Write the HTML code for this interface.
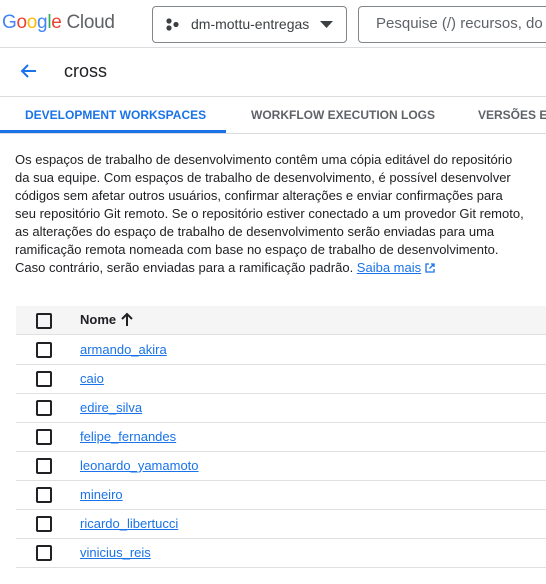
<!DOCTYPE html><html><head><style>
body{margin:0;width:546px;height:584px;overflow:hidden;background:#fff;font-family:"Liberation Sans",Arial,sans-serif;color:#202124;position:relative}
.a{position:absolute;white-space:nowrap}
.cb{position:absolute;left:36px;width:12px;height:12px;border:2px solid #202124;border-radius:2px}
.row{position:absolute;left:16px;width:530px;height:29px;border-bottom:1px solid #e0e0e0}
.row a{position:absolute;left:64px;top:7px;font-size:13px;color:#1a73e8;text-decoration:underline}
</style></head><body>
<div class="a" style="left:2px;top:12px;font-size:19px;letter-spacing:-0.3px"><span style="color:#4285f4">G</span><span style="color:#ea4335">o</span><span style="color:#fbbc04">o</span><span style="color:#4285f4">g</span><span style="color:#34a853">l</span><span style="color:#ea4335">e</span> <span style="color:#5f6368">Cloud</span></div>
<div class="a" style="left:152px;top:6px;width:193px;height:35px;border:1px solid #80868b;border-radius:4px"></div>
<svg class="a" style="left:166px;top:18px" width="14" height="13"><circle cx="3" cy="3" r="2.6" fill="#3c4043"/><circle cx="3" cy="10" r="2.6" fill="#3c4043"/><circle cx="10" cy="6.5" r="2.6" fill="#3c4043"/></svg>
<div class="a" style="left:191px;top:16px;font-size:14px;color:#3c4043">dm-mottu-entregas</div>
<svg class="a" style="left:320px;top:21px" width="13" height="7"><path d="M0 0h13L6.5 7z" fill="#3c4043"/></svg>
<div class="a" style="left:358px;top:6px;width:220px;height:35px;border:1px solid #80868b;border-radius:4px;background:#fff"></div>
<div class="a" style="left:376px;top:15px;font-size:15px;color:#5f6368">Pesquise (/) recursos, do</div>
<div class="a" style="left:0;top:47px;width:546px;border-top:1px solid #dadce0"></div>
<svg class="a" style="left:19px;top:63px" width="18" height="16"><path d="M17 8H3M9 2L3 8l6 6" stroke="#1a73e8" stroke-width="2" fill="none"/></svg>
<div class="a" style="left:64px;top:61px;font-size:18px">cross</div>
<div class="a" style="left:0;top:96px;width:546px;border-top:1px solid #dadce0"></div>
<div class="a" style="left:25px;top:108px;font-size:12px;font-weight:bold;color:#1a73e8">DEVELOPMENT WORKSPACES</div>
<div class="a" style="left:251px;top:108px;font-size:12px;font-weight:bold;color:#5f6368">WORKFLOW EXECUTION LOGS</div>
<div class="a" style="left:478px;top:108px;font-size:12px;font-weight:bold;color:#5f6368">VERSÕES E</div>
<div class="a" style="left:0;top:130px;width:226px;height:3px;background:#1a73e8"></div>
<div class="a" style="left:0;top:133px;width:546px;border-top:1px solid #dadce0"></div>
<div class="a" style="left:15px;top:151px;font-size:13px;line-height:18px;white-space:normal;width:530px">Os espaços de trabalho de desenvolvimento contêm uma cópia editável do repositório<br>da sua equipe. Com espaços de trabalho de desenvolvimento, é possível desenvolver<br>códigos sem afetar outros usuários, confirmar alterações e enviar confirmações para<br>seu repositório Git remoto. Se o repositório estiver conectado a um provedor Git remoto,<br>as alterações do espaço de trabalho de desenvolvimento serão enviadas para uma<br>ramificação remota nomeada com base no espaço de trabalho de desenvolvimento.<br>Caso contrário, serão enviadas para a ramificação padrão. <span style="color:#1a73e8;text-decoration:underline">Saiba mais</span> <svg width="10" height="10" style="vertical-align:-1px"><path d="M4 1H1v8h8V6M6 1h3v3M9 1L4.5 5.5" stroke="#1a73e8" stroke-width="1.3" fill="none"/></svg></div>
<div class="a" style="left:16px;top:306px;width:530px;height:28px;background:#f5f5f5;border-bottom:1px solid #e0e0e0"></div>
<div class="cb" style="top:313px"></div>
<div class="a" style="left:80px;top:312px;font-size:13px;font-weight:bold;color:#202124">Nome</div>
<svg class="a" style="left:121px;top:312px" width="12" height="14"><path d="M6 14V2M1 7l5-5 5 5" stroke="#202124" stroke-width="2" fill="none"/></svg>
<div class="row" style="top:335px"><a>armando_akira</a></div><div class="cb" style="top:342px"></div>
<div class="row" style="top:364px"><a>caio</a></div><div class="cb" style="top:371px"></div>
<div class="row" style="top:393px"><a>edire_silva</a></div><div class="cb" style="top:400px"></div>
<div class="row" style="top:422px"><a>felipe_fernandes</a></div><div class="cb" style="top:429px"></div>
<div class="row" style="top:451px"><a>leonardo_yamamoto</a></div><div class="cb" style="top:458px"></div>
<div class="row" style="top:480px"><a>mineiro</a></div><div class="cb" style="top:487px"></div>
<div class="row" style="top:509px"><a>ricardo_libertucci</a></div><div class="cb" style="top:516px"></div>
<div class="row" style="top:538px"><a>vinicius_reis</a></div><div class="cb" style="top:545px"></div>
</body></html>
